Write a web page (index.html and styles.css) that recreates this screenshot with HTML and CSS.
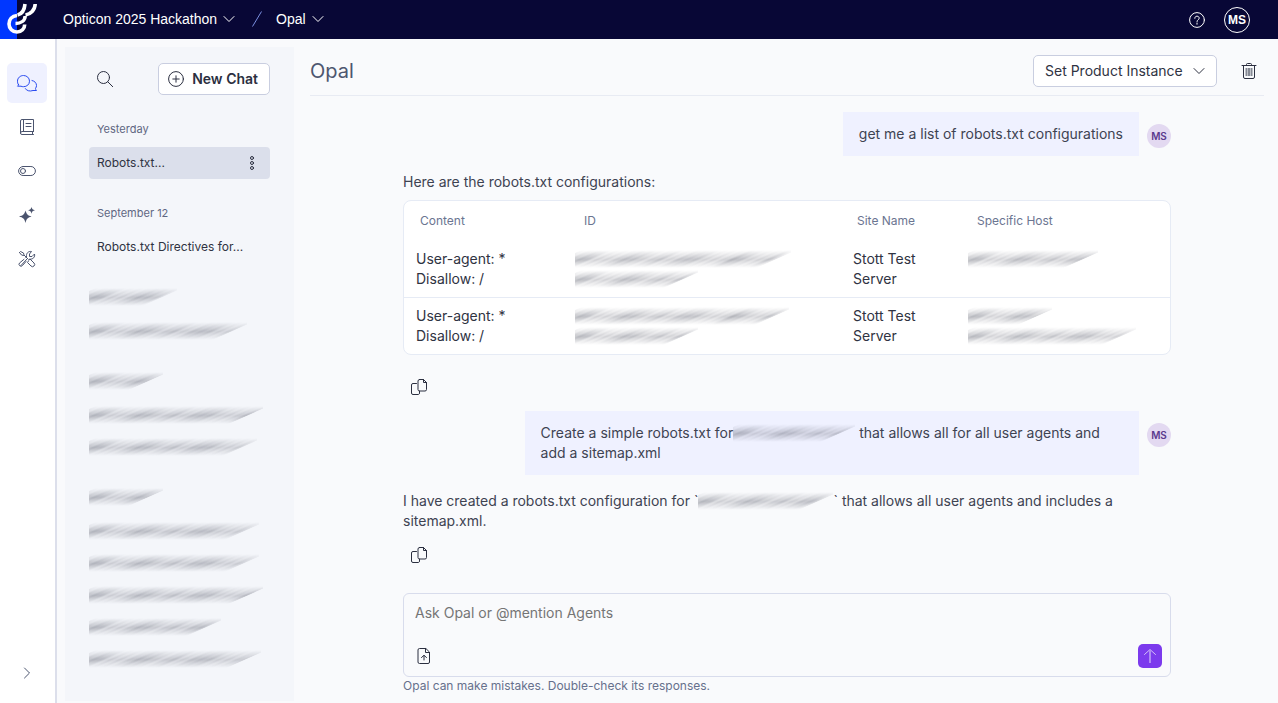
FILE: index.html
```
<!DOCTYPE html>
<html lang="en">
<head>
<meta charset="utf-8">
<meta name="viewport" content="width=device-width, initial-scale=1">
<title>Opal</title>
<link rel="stylesheet" href="styles.css">
</head>
<body>
<svg class="sprite" aria-hidden="true">
  <symbol id="chevron" viewBox="0 0 12 12"><path d="M1 3.500l5 5 5-5"/></symbol>
  <symbol id="copy" viewBox="0 0 18 18"><path d="M6.500 5.500H3a1.500 1.500 0 0 0-1.500 1.500v8A1.500 1.500 0 0 0 3 16.500h5.500A1.500 1.500 0 0 0 9.500 15v-2M9.500 1.500h4l3 3v7a1.500 1.500 0 0 1-1.500 1.500H9.500A1.500 1.500 0 0 1 8 11.500V3a1.500 1.500 0 0 1 1.500-1.500zM13.500 1.500v3h3"/></symbol>
</svg>
<header class="topbar">
  <a class="logo" href="#" aria-label="Home">
    <svg width="39" height="39" viewBox="0 0 39 39"><path class="logo-tile" d="M0 0h17v39H0z"/><path class="logo-mark" d="M17 15.500c-5 .5-8 4-8 8.500 0 4.500 3.500 8 8 8s7.700-3.500 7.700-7.500M15.500 23.500c5.500 0 9.500-3 9.700-7.500M17.500 15c4.500-1 7-5 7.500-11M25.500 15c5-.8 9.500-5 9.700-11"/></svg>
  </a>
  <nav class="crumbs" aria-label="Breadcrumb">
    <button class="crumb" type="button">Opticon 2025 Hackathon<svg class="icon" width="12" height="12"><use href="#chevron"/></svg></button>
    <svg class="slash" width="10" height="16" viewBox="0 0 10 16"><path d="M.5 15.500l9-15"/></svg>
    <button class="crumb" type="button">Opal<svg class="icon" width="12" height="12"><use href="#chevron"/></svg></button>
  </nav>
  <button class="help" type="button" aria-label="Help"><svg class="icon" width="16" height="16" viewBox="0 0 16 16"><circle cx="8" cy="8" r="7.400"/><path d="M5.800 6.300c0-1.300.9-2.100 2.200-2.100s2.200.8 2.200 2c0 1.600-2.200 1.500-2.200 3.300M8 11v1.200"/></svg></button>
  <button class="account" type="button">MS</button>
</header>
<div class="app">
  <nav class="rail" aria-label="Main">
    <button class="rail-item active" type="button" aria-label="Chats"><svg class="icon" width="22" height="20" viewBox="0 0 22 20"><path d="M2.500 11.700C1.700 10.600 1.500 9.500 1.500 8.200c0-3.300 2.700-5.700 6-5.700s6 2.400 6 5.700-2.700 5.500-6 5.500c-.9 0-1.700-.1-2.500-.5H1.500c.6-.4 1-.9 1-1.500zM16 7.500c2.700.5 4.500 2.500 4.500 5 0 1.100-.3 2-1 2.900 0 .9.400 1.500 1 2.100H17c-3.200 1.200-6.600.2-7.700-1.900"/></svg></button>
    <button class="rail-item" type="button" aria-label="Library"><svg class="icon" width="16" height="18" viewBox="0 0 16 18"><path d="M14.500 13.500V1.500H3A1.500 1.500 0 0 0 1.500 3v12A1.500 1.500 0 0 0 3 16.500h11.500M14.500 13.500H3A1.500 1.500 0 0 0 1.500 15M13.500 13.500v3M4.500 1.500v12M7 5.500h5M7 8.500h5"/></svg></button>
    <button class="rail-item" type="button" aria-label="Controls"><svg class="icon" width="18" height="12" viewBox="0 0 18 12"><rect x=".6" y="1.500" width="16.800" height="9" rx="4.500"/><circle cx="5" cy="6" r="2.500"/></svg></button>
    <button class="rail-item" type="button" aria-label="Agents"><svg class="icon solid" width="18" height="18" viewBox="0 0 18 18"><path d="M7.500 4.500c1 3.700 2.300 5 6 6-3.700 1-5 2.300-6 6.500-1-4.200-2.300-5.500-6.500-6.500 4.200-1 5.500-2.300 6.500-6zM13.500 1c.6 2.200 1.100 2.700 3.500 3.300-2.400.6-2.900 1.100-3.500 3.400-.6-2.300-1.100-2.800-3.400-3.400 2.300-.6 2.800-1.100 3.400-3.300z"/></svg></button>
    <button class="rail-item" type="button" aria-label="Tools"><svg class="icon" width="18" height="18" viewBox="0 0 18 18"><path d="M1.500 2.500l1-1 3 1.500.5 2 4 4M5.500 5.500l-2-.5-2-2.500M10.500 10l1.500-1 4 4a1.800 1.800 0 0 1-3 3l-3.500-3.500 1-1.500M8.500 6.500c-.5-3 1.500-5.500 5-5L11.500 4v2.500H14l2.500-2.500c.8 3-1.500 5.500-4.500 5.200M9 9l-6 6.500M8.500 6.500L7.800 7.300M8 11.500l-3.500 4a1.900 1.900 0 0 1-3-2.500L6 9.300"/></svg></button>
    <button class="rail-item expand" type="button" aria-label="Expand"><svg class="icon" width="12" height="12" viewBox="0 0 12 12"><path d="M3.500 1l5 5-5 5"/></svg></button>
  </nav>
  <aside class="history">
    <div class="history-tools">
      <button class="plain" type="button" aria-label="Search"><svg class="icon" width="16" height="16" viewBox="0 0 16 16"><circle cx="6.500" cy="6.500" r="6"/><path d="M10.800 10.800l4.900 4.900"/></svg></button>
      <button class="new-chat" type="button"><svg class="icon" width="16" height="16" viewBox="0 0 16 16"><circle cx="8" cy="8" r="7.400"/><path d="M8 4.800v6.400M4.800 8h6.400"/></svg>New Chat</button>
    </div>
    <section class="group"><h2>Yesterday</h2>
      <div class="chat current"><a href="#">Robots.txt...</a><button class="plain" type="button" aria-label="More"><svg class="icon" width="6" height="16" viewBox="0 0 6 16"><circle cx="3" cy="3" r="1.500"/><circle cx="3" cy="8" r="1.500"/><circle cx="3" cy="13" r="1.500"/></svg></button></div>
    </section>
    <section class="group"><h2>September 12</h2><div class="chat"><a href="#">Robots.txt Directives for...</a></div></section>
    <section class="group"><div class="row"><span class="smudge" style="width:88px"></span></div><div class="row"><span class="smudge" style="width:158px"></span></div></section>
    <section class="group"><div class="row"><span class="smudge" style="width:74px"></span></div><div class="row"><span class="smudge" style="width:174px"></span></div><div class="row"><span class="smudge" style="width:168px"></span></div></section>
    <section class="group"><div class="row"><span class="smudge" style="width:74px"></span></div><div class="row"><span class="smudge" style="width:170px"></span></div><div class="row"><span class="smudge" style="width:170px"></span></div><div class="row"><span class="smudge" style="width:174px"></span></div><div class="row"><span class="smudge" style="width:132px"></span></div><div class="row"><span class="smudge" style="width:172px"></span></div></section>
  </aside>
  <main class="main">
    <div class="titlebar">
      <h1>Opal</h1>
      <div class="select-wrap"><select aria-label="Product instance"><option>Set Product Instance</option></select><svg class="icon" width="12" height="12"><use href="#chevron"/></svg></div>
      <button class="plain" type="button" aria-label="Delete"><svg class="icon" width="16" height="18" viewBox="0 0 16 18"><path d="M1 3.500h14M5.500 3.500v-1a1 1 0 0 1 1-1h3a1 1 0 0 1 1 1v1M2.500 3.500V15A1.500 1.500 0 0 0 4 16.500h8a1.500 1.500 0 0 0 1.500-1.500V3.500"/><path class="bars" d="M5.500 6v8M8 6v8M10.500 6v8"/></svg></button>
    </div>
    <div class="thread">
      <div class="ask"><p class="bubble">get me a list of robots.txt configurations</p><span class="avatar">MS</span></div>
      <div class="answer">
        <p>Here are the robots.txt configurations:</p>
        <div class="card"><table>
          <colgroup><col class="c-content"><col class="c-id"><col class="c-site"><col></colgroup>
          <thead><tr><th>Content</th><th>ID</th><th>Site Name</th><th>Specific Host</th></tr></thead>
          <tbody>
            <tr><td>User-agent: *<br>Disallow: /</td><td><div class="hidden-value"><span class="smudge" style="width:216px"></span><span class="smudge" style="width:123px"></span></div></td><td>Stott Test Server</td><td><div class="hidden-value"><span class="smudge" style="width:130px"></span></div></td></tr>
            <tr><td>User-agent: *<br>Disallow: /</td><td><div class="hidden-value"><span class="smudge" style="width:214px"></span><span class="smudge" style="width:123px"></span></div></td><td>Stott Test Server</td><td><div class="hidden-value"><span class="smudge" style="width:84px"></span><span class="smudge" style="width:168px"></span></div></td></tr>
          </tbody>
        </table></div>
        <button class="copy" type="button" aria-label="Copy"><svg class="icon" width="18" height="18"><use href="#copy"/></svg></button>
      </div>
      <div class="ask"><p class="bubble wide">Create a simple robots.txt for<span class="smudge inline" style="width:122px"></span> that allows all for all user agents and add a sitemap.xml</p><span class="avatar">MS</span></div>
      <div class="answer">
        <p>I have created a robots.txt configuration for `<span class="smudge inline" style="width:135px"></span>` that allows all user agents and includes a sitemap.xml.</p>
        <button class="copy" type="button" aria-label="Copy"><svg class="icon" width="18" height="18"><use href="#copy"/></svg></button>
      </div>
    </div>
    <form class="composer">
      <div class="composer-box">
        <textarea rows="1" aria-label="Message" placeholder="Ask Opal or @mention Agents"></textarea>
        <div class="composer-tools">
          <button class="plain" type="button" aria-label="Attach file"><svg class="icon" width="18" height="18" viewBox="0 0 18 18"><path d="M10.500 1.500H4.500A1.500 1.500 0 0 0 3 3v12a1.500 1.500 0 0 0 1.500 1.500h8.500A1.500 1.500 0 0 0 14.500 15V5.500zM10.500 1.500V5.500H14.500M9 13V8.500M6.500 10.500L9 8.300l2.500 2.200"/></svg></button>
          <button class="send" type="button" aria-label="Send"><svg class="icon" width="14" height="16" viewBox="0 0 14 16"><path d="M1.500 6.500L7 1.500l5.500 5"/><path class="stem" d="M7 15V2"/></svg></button>
        </div>
      </div>
      <p class="note">Opal can make mistakes. Double-check its responses.</p>
    </form>
  </main>
</div>
</body>
</html>
```
FILE: styles.css
```
* { box-sizing: border-box; }
body { margin: 0; min-height: 100vh; display: flex; flex-direction: column; background: #f9fafc; color: #3e4352; font: 14px/20px Inter, sans-serif; }
h1, h2, p { margin: 0; font-weight: 400; }
button, select, textarea { font: inherit; color: inherit; margin: 0; }
button { padding: 0; border: 0; background: none; }
a { color: inherit; text-decoration: none; }
.sprite { display: none; }
.icon { display: block; flex: none; fill: none; stroke: currentColor; stroke-width: 1; stroke-linecap: round; stroke-linejoin: round; }
.solid { fill: currentColor; stroke: none; }
.plain { display: flex; color: #2b2f40; }

.topbar { display: flex; align-items: center; height: 39px; padding-right: 28px; background: #080736; color: #fff; font-family: "Liberation Sans", sans-serif; }
.logo { width: 39px; height: 39px; }
.logo svg { display: block; }
.logo-tile { fill: #0037ff; }
.logo-mark { fill: none; stroke: #fff; stroke-width: 3.600; }
.crumbs { display: flex; align-items: center; flex: 1; gap: 14px; padding: 0 0 2px 24px; }
.crumb { display: flex; align-items: center; gap: 6px; }
.slash { margin-left: 3px; fill: none; stroke: #7a8fe0; }
.help { margin-right: 19px; }
.account { width: 26px; height: 26px; border: 1px solid #fff; border-radius: 50%; font-size: 12px; font-weight: 700; line-height: 22px; }

.app { display: flex; flex: 1; }
.rail { display: flex; flex-direction: column; gap: 4px; width: 57px; padding: 24px 7px 10px; background: #fff; border-right: 2px solid #dcdfeb; color: #4b546e; }
.rail-item { display: grid; place-items: center; width: 40px; height: 40px; border-radius: 5px; }
.rail-item.active { background: #eff1ff; color: #2a4bf0; }
.expand { margin-top: auto; }

.history { width: 229px; margin: 8px 0 2px 8px; padding: 16px 24px; background: #f4f6fa; font-size: 12px; }
.history-tools { display: flex; align-items: center; justify-content: space-between; height: 32px; padding-left: 8px; margin-bottom: 18px; }
.new-chat { display: flex; align-items: center; gap: 8px; height: 32px; padding: 0 11px 0 9px; border: 1px solid #c9cee0; border-radius: 5px; background: #fff; color: #2b2f40; font-size: 14px; font-weight: 600; }
.group { margin-bottom: 18px; }
.group:last-child { margin-bottom: 0; }
.group h2 { padding-left: 8px; margin-bottom: 2px; font-size: 11px; line-height: 32px; color: #5f6782; }
.chat { display: flex; align-items: center; justify-content: space-between; height: 32px; padding: 0 15px 0 8px; border-radius: 4px; color: #2f3342; white-space: nowrap; }
.chat.current { background: #dbdfeb; }
.row { display: flex; align-items: center; height: 32px; }
.row:first-child { margin-bottom: 2px; }

.smudge { display: block; height: 20px; overflow: hidden; }
.smudge::before {
  content: ""; display: block; height: 20px; margin: 0 14px 0 -14px; transform: skewX(-66deg); filter: blur(2px);
  background:
    repeating-linear-gradient(90deg, rgba(90, 94, 108, .3) 0 3px, transparent 3px 9px),
    repeating-linear-gradient(90deg, transparent 0 7px, rgba(90, 94, 108, .16) 14px 22px, transparent 30px 53px),
    repeating-linear-gradient(90deg, transparent 0 18px, rgba(90, 94, 108, .14) 22px 27px, transparent 31px 37px),
    rgba(90, 94, 108, .14);
  -webkit-mask: linear-gradient(transparent 1px, #000 10px, #000 11px, transparent 19px);
  mask: linear-gradient(transparent 1px, #000 10px, #000 11px, transparent 19px);
}
.smudge.inline { display: inline-block; vertical-align: top; }
.hidden-value { min-height: 40px; margin-left: -5px; }

.main { display: flex; flex-direction: column; flex: 1; min-width: 0; padding: 0 14px 8px 16px; }
.titlebar { display: flex; align-items: center; height: 57px; padding: 8px 7px 0 0; border-bottom: 1px solid #e8ebf3; }
.titlebar h1 { flex: 1; font-size: 20px; line-height: 28px; color: #4d566f; }
.select-wrap { display: grid; align-items: center; width: 184px; margin-right: 24px; color: #2f3342; }
.select-wrap > * { grid-area: 1 / 1; }
.select-wrap .icon { justify-self: end; margin-right: 12px; pointer-events: none; }
.select-wrap select { appearance: none; width: 100%; height: 32px; padding: 0 32px 0 11px; border: 1px solid #c9cee0; border-radius: 5px; background: #fff; }
.bars { stroke: #858994; stroke-width: 2; stroke-linecap: butt; }
.thread { display: flex; flex-direction: column; flex: 1; width: 100%; max-width: 768px; margin: 0 auto; padding-top: 16px; }
.ask { display: flex; justify-content: flex-end; gap: 8px; }
.bubble { padding: 12px 16px; background: #eff1ff; }
.bubble.wide { width: 80%; }
.avatar { flex: none; width: 24px; height: 24px; margin-top: 12px; border-radius: 50%; background: #e3d9f1; color: #5b3a8e; font-size: 10px; font-weight: 600; line-height: 24px; text-align: center; }
.answer { padding: 16px 0 15px; }
.card { margin: 8px 0; border: 1px solid #e6ebf5; border-radius: 8px; background: #fff; color: #2f3342; }
table { width: 100%; border-collapse: collapse; table-layout: fixed; }
.c-content { width: 164px; }
.c-id { width: 273px; }
.c-site { width: 120px; }
th { height: 40px; padding: 0 16px; font-size: 12px; font-weight: 400; text-align: left; color: #6b7591; }
td { padding: 8px 12px; vertical-align: top; }
tbody tr + tr { border-top: 1px solid #e6ebf5; }
.copy { display: flex; margin: 15px 0 0 7px; color: #2b2f40; }
.card + .copy { margin-top: 23px; }
.answer:last-child { padding-bottom: 0; }
.composer { width: 100%; max-width: 768px; margin: 0 auto; }
.composer-box { display: flex; flex-direction: column; justify-content: space-between; height: 84px; padding: 9px 8px 8px 11px; border: 1px solid #d8dcec; border-radius: 6px; }
.composer textarea { width: 100%; height: 20px; padding: 0; border: 0; outline: 0; resize: none; background: none; }
.composer textarea::placeholder { color: #757575; }
.composer-tools { display: flex; align-items: center; justify-content: space-between; }
.send { display: grid; place-items: center; width: 24px; height: 24px; border-radius: 5px; background: #7c3aed; color: #d3bff8; }
.stem { stroke: #b08bf4; stroke-width: 2; stroke-linecap: butt; }
.note { font-size: 12px; line-height: 18px; color: #66708c; }
```
